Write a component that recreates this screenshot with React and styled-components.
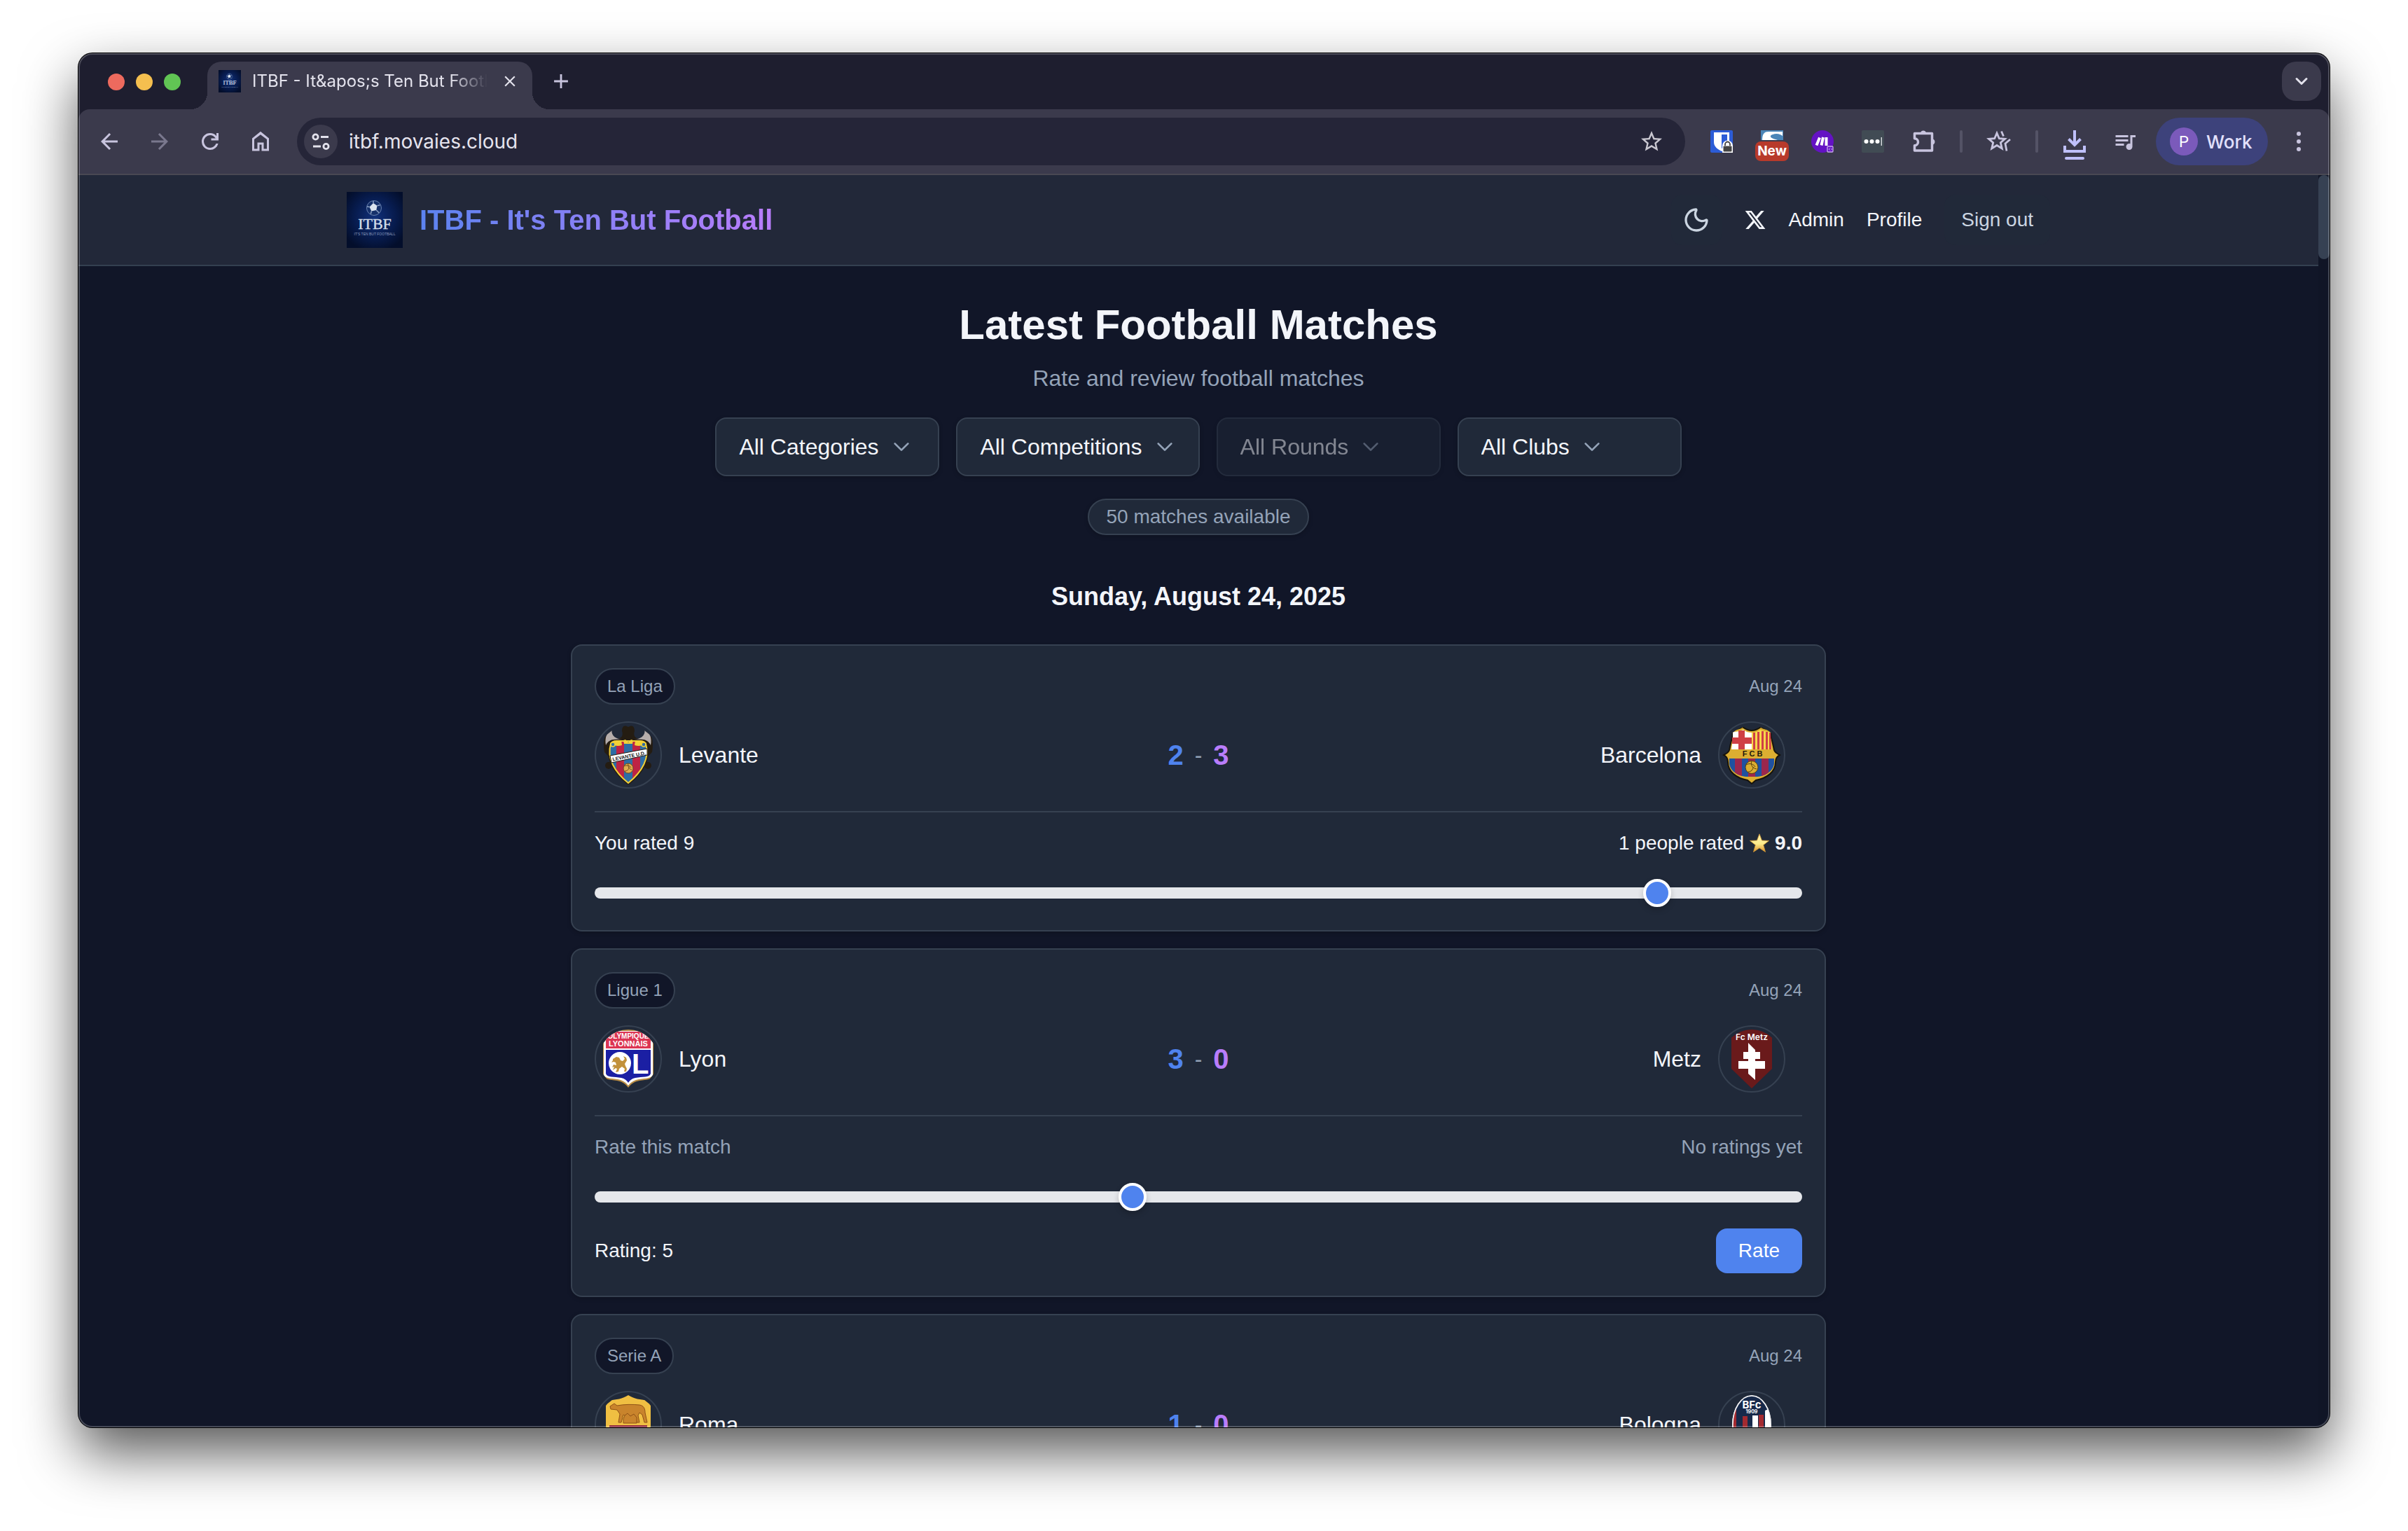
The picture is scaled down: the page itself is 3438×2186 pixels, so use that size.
import { useState } from "react";
import styled, { createGlobalStyle, css } from "styled-components";
import { Moon } from "lucide-react";
import { MdAdd, MdArrowBack, MdArrowForward, MdClose, MdQueueMusic, MdStarBorder } from "react-icons/md";

const GlobalStyle = createGlobalStyle`
    * {
        box-sizing: border-box;
    }
    body {
        margin: 0;
        background: #ffffff;
    }
    button, input, select {
        font: inherit;
        color: inherit;
        margin: 0;
    }
    button {
        border: none;
        background: none;
        padding: 0;
        cursor: pointer;
    }
    svg {
        display: block;
        flex-shrink: 0;
    }
`;

/* ---------- window ---------- */

const Desktop = styled.div`
    height: 100vh;
    padding: 76px 112px 148px;
    overflow: hidden;
`;

const Window = styled.div`
    position: relative;
    height: 100%;
    display: flex;
    flex-direction: column;
    overflow: hidden;
    border-radius: 20px;
    background: #1e1e2f;
    box-shadow: 0 0 0 1px #000000, 0 36px 80px rgba(0, 0, 0, 0.66);

    &::after {
        content: "";
        position: absolute;
        inset: 0;
        border: 2px solid rgba(255, 255, 255, 0.22);
        border-radius: 20px;
        pointer-events: none;
    }
`;

const TabStrip = styled.div`
    height: 80px;
    display: flex;
    align-items: flex-end;
    padding: 0 12px 0 42px;
    font-family: Inter, "Liberation Sans", sans-serif;
`;

const Lights = styled.div`
    display: flex;
    gap: 16px;
    align-self: center;
    margin-right: 14px;
    padding-top: 2px;
`;

const Light = styled.span`
    width: 24px;
    height: 24px;
    border-radius: 50%;
    background: ${(props) => props.$color};
`;

const Flare = styled.span`
    width: 24px;
    height: 24px;
    background: radial-gradient(circle at ${(props) => (props.$right ? "100%" : "0")} 0, transparent 24px, #3b3a4c 24px);
`;

const Tab = styled.div`
    width: 464px;
    height: 68px;
    display: flex;
    align-items: center;
    padding: 0 16px 12px;
    border-radius: 20px 20px 0 0;
    background: #3b3a4c;
    color: #e3e2ec;
`;

const TabTitle = styled.span`
    width: 336px;
    margin: 0 16px 0 16px;
    overflow: hidden;
    white-space: nowrap;
    font-size: 24px;
    line-height: 32px;
    mask-image: linear-gradient(90deg, #000 84%, transparent);
`;

const TabButton = styled.button`
    width: 32px;
    height: 32px;
    display: grid;
    place-items: center;
    color: ${(props) => props.$color || "#e3e2ec"};
`;

const NewTab = styled(TabButton)`
    height: 56px;
    margin-bottom: 12px;
`;

const TabSearch = styled(TabButton)`
    width: 56px;
    height: 56px;
    margin: 0 0 12px auto;
    border-radius: 20px;
    background: #3b3a4c;
`;

const Toolbar = styled.div`
    height: 94px;
    flex-shrink: 0;
    display: flex;
    align-items: center;
    padding: 0 8px;
    border-bottom: 2px solid #494853;
    border-radius: 16px 16px 0 0;
    background: #3b3a4c;
    color: #c8c4de;
    font-family: Inter, "Liberation Sans", sans-serif;
`;

const ToolButton = styled.button`
    width: 72px;
    height: 68px;
    display: grid;
    place-items: center;
    opacity: ${(props) => (props.disabled ? 0.45 : 1)};
`;

const Divider = styled.span`
    width: 4px;
    height: 32px;
    margin: 0 16px;
    border-radius: 2px;
    background: #545366;
`;

const AddressBar = styled.div`
    flex: 1;
    height: 68px;
    margin: 0 16px;
    padding: 0 30px 0 10px;
    display: flex;
    align-items: center;
    border-radius: 34px;
    background: #252538;
    color: #c9c7d0;
`;

const SiteInfo = styled.button`
    width: 48px;
    height: 48px;
    display: grid;
    place-items: center;
    border-radius: 50%;
    background: #3b3a4c;
`;

const Address = styled.input`
    flex: 1;
    min-width: 0;
    padding: 0 0 0 16px;
    border: none;
    outline: none;
    background: none;
    color: #e6e4ee;
    font-size: 28px;
    line-height: 40px;
`;

const ProfileChip = styled.button`
    width: 160px;
    height: 68px;
    margin: 0 8px;
    padding: 0 20px;
    display: flex;
    align-items: center;
    gap: 12px;
    border-radius: 34px;
    background: #3d427b;
    color: #e2e0fb;
    font-size: 26px;
    font-weight: 500;
`;

const ProfileInitial = styled.span`
    width: 40px;
    height: 40px;
    display: grid;
    place-items: center;
    border-radius: 50%;
    background: #7b5abb;
    color: #ffffff;
    font-family: Roboto, sans-serif;
    font-size: 22px;
    font-weight: 400;
`;

/* ---------- page ---------- */

const Viewport = styled.div`
    flex: 1;
    min-height: 0;
    display: flex;
    background: #111628;
    color: #f3f5fa;
    font-family: "Liberation Sans", Arial, sans-serif;
`;

const Page = styled.div`
    flex: 1;
    min-width: 0;
    overflow: hidden;
`;

const ScrollTrack = styled.div`
    width: 16px;
    background: #101526;
`;

const ScrollThumb = styled.div`
    height: 120px;
    border-radius: 8px;
    background: #364153;
`;

const Header = styled.header`
    border-bottom: 2px solid #344050;
    background: #222839;
`;

const HeaderInner = styled.div`
    max-width: 2560px;
    height: 128px;
    margin: 0 auto;
    padding: 0 64px;
    display: flex;
    align-items: center;
    justify-content: space-between;
`;

const Brand = styled.a`
    display: flex;
    align-items: center;
    gap: 24px;
    text-decoration: none;
`;

const BrandName = styled.span`
    font-size: 40px;
    font-weight: 700;
    line-height: 56px;
    background: linear-gradient(90deg, #5c83f0, #b97dfb);
    background-clip: text;
    color: transparent;
`;

const Nav = styled.nav`
    display: flex;
    align-items: center;
    gap: 32px;
    font-size: 28px;
    line-height: 40px;
`;

const NavLink = styled.a`
    color: #f3f5fa;
    text-decoration: none;
`;

const NavButton = styled.button`
    height: 72px;
    padding: 0 ${(props) => (props.$icon ? 16 : 24)}px;
    border-radius: 16px;
    background: #212939;
    color: #cbd5e1;
`;

const Main = styled.main`
    padding: 48px 32px;
    display: flex;
    flex-direction: column;
    align-items: center;
`;

const Title = styled.h1`
    margin: 0 0 16px;
    font-size: 60px;
    line-height: 72px;
`;

const Subtitle = styled.p`
    margin: 0 0 32px;
    color: #94a3b8;
    font-size: 32px;
    line-height: 48px;
`;

const Filters = styled.div`
    display: flex;
    gap: 24px;
    margin-bottom: 32px;
`;

const panel = css`
    border: 2px solid #364151;
    background: #202939;
    box-shadow: 0 2px 6px rgba(0, 0, 0, 0.2);
`;

const FilterBox = styled.label`
    ${panel}
    min-width: 320px;
    height: 84px;
    padding: 0 32px;
    display: flex;
    align-items: center;
    gap: 16px;
    border-radius: 16px;
    opacity: ${(props) => (props.$disabled ? 0.5 : 1)};
`;

const FilterSelect = styled.select`
    appearance: none;
    field-sizing: content;
    padding: 0;
    border: none;
    outline: none;
    background: none;
    color: #f3f5fa;
    font-size: 32px;
    line-height: 48px;
    opacity: 1;
`;

const Count = styled.span`
    ${panel}
    height: 52px;
    padding: 0 24px;
    display: flex;
    align-items: center;
    border-radius: 26px;
    color: #94a3b8;
    font-size: 28px;
`;

const DateHeading = styled.h2`
    margin: 60px 0 40px;
    font-size: 36px;
    line-height: 56px;
`;

const MatchList = styled.div`
    width: 100%;
    max-width: 1792px;
    display: flex;
    flex-direction: column;
    gap: 24px;
`;

const Card = styled.article`
    ${panel}
    padding: 32px;
    border-radius: 16px;
`;

const Row = styled.div`
    display: flex;
    align-items: center;
    justify-content: space-between;
    color: ${(props) => (props.$muted ? "#94a3b8" : "#f3f5fa")};
    font-size: 28px;
    line-height: 40px;
`;

const CardTop = styled(Row)`
    margin-bottom: 24px;
    color: #94a3b8;
    font-size: 24px;
`;

const League = styled.span`
    height: 52px;
    padding: 0 16px;
    display: flex;
    align-items: center;
    border: 2px solid #364151;
    border-radius: 26px;
    background: #111628;
`;

const Teams = styled.div`
    display: grid;
    grid-template-columns: 1fr auto 1fr;
    align-items: center;
    padding-bottom: 32px;
    margin-bottom: 24px;
    border-bottom: 2px solid #364151;
    font-size: 32px;
    line-height: 48px;
`;

const Team = styled.div`
    display: flex;
    align-items: center;
    gap: 24px;
    ${(props) => props.$away && "justify-content: flex-end; padding-right: 24px;"}
`;

const Badge = styled.span`
    width: 96px;
    height: 96px;
    padding: 4px;
    border: 2px solid #364151;
    border-radius: 50%;

    svg {
        border-radius: 50%;
    }
`;

const Score = styled.div`
    display: flex;
    align-items: center;
    gap: 16px;
    color: #94a3b8;
`;

const Goals = styled.strong`
    color: ${(props) => (props.$away ? "#b97dfb" : "#4f83ee")};
    font-size: 40px;
    line-height: 56px;
`;

const Average = styled.span`
    display: flex;
    align-items: center;
    gap: 8px;
`;

const SliderRow = styled.div`
    height: 48px;
    margin-top: 24px;
    padding-top: 7px;
`;

const Slider = styled.input`
    appearance: none;
    display: block;
    width: 100%;
    height: 40px;
    background: none;
    cursor: pointer;

    &::-webkit-slider-runnable-track {
        height: 16px;
        border-radius: 8px;
        background: #e5e7eb;
    }

    &::-webkit-slider-thumb {
        appearance: none;
        width: 40px;
        height: 40px;
        margin-top: -12px;
        border: 4px solid #ffffff;
        border-radius: 50%;
        background: #4f83ee;
        box-shadow: 0 4px 8px rgba(0, 0, 0, 0.2);
    }
`;

const RateRow = styled(Row)`
    margin-top: 24px;
`;

const RateButton = styled.button`
    height: 64px;
    padding: 0 32px;
    border-radius: 16px;
    background: #4f83ee;
    color: #ffffff;
`;

/* ---------- icons ---------- */

const Logo = ({ size, id }) => (
    <svg width={size} height={size} viewBox="0 0 80 80" role="img" aria-label="ITBF">
        <defs>
            <radialGradient id={id} cx="50%" cy="45%" r="62%">
                <stop offset="0" stopColor="#10307a" />
                <stop offset="0.6" stopColor="#071b4d" />
                <stop offset="1" stopColor="#030e2b" />
            </radialGradient>
        </defs>
        <rect width="80" height="80" fill={`url(#${id})`} />
        <circle cx="39" cy="23" r="10.5" fill="#15306a" stroke="#6780ae" strokeWidth="1" />
        <path d="M38 16l5.500 3.800-1.200 6.200-7 1.500-2.800-6z" fill="#dbe4ef" />
        <path d="M38 16v-3M43.500 19.800l4-1M42.300 26l4 4M35.300 27.500l-1 4M32.500 21.500l-3.500-.5" stroke="#8fa3c6" strokeWidth="1.500" />
        <text x="40" y="53" textAnchor="middle" fontFamily="Liberation Serif, serif" fontSize="22" stroke="#d4dde8" strokeWidth=".4" fill="#d4dde8">ITBF</text>
        <text x="40" y="62" textAnchor="middle" fontFamily="Liberation Sans, sans-serif" fontSize="5" fill="#8b9bbb">IT'S TEN BUT FOOTBALL</text>
    </svg>
);

const ReloadIcon = () => (
    <svg width="36" height="36" viewBox="0 0 24 24" fill="currentColor">
        <path d="M12 20q-3.350 0-5.675-2.325T4 12t2.325-5.675T12 4q1.725 0 3.300.713T18 6.750V4h2v7h-7V9h4.200q-.8-1.400-2.187-2.200T12 6Q9.500 6 7.750 7.750T6 12t1.750 4.250T12 18q1.925 0 3.475-1.100T17.650 14h2.100q-.7 2.650-2.850 4.325T12 20" />
    </svg>
);

const HomeIcon = () => (
    <svg width="36" height="36" viewBox="0 0 24 24" fill="currentColor">
        <path d="M6 19h3v-6h6v6h3v-9l-6-4.500L6 10v9zm-2 2V9l8-6.500L20 9v12h-7v-6h-2v6H4z" />
    </svg>
);

const TuneIcon = () => (
    <svg width="28" height="28" viewBox="0 0 28 28" fill="none" stroke="#e3e2ec" strokeWidth="2.800">
        <circle cx="6.500" cy="7.500" r="3.600" />
        <path d="M14 7.500h11M3 21h11" />
        <circle cx="21.500" cy="21" r="3.600" />
    </svg>
);

const VaultIcon = () => (
    <svg width="32" height="32" viewBox="0 0 32 32">
        <rect width="32" height="32" rx="2" fill="#2c5cd6" />
        <path d="M5 3h22v14c0 6-5 10-11 13C10 27 5 23 5 17z" fill="#fff" />
        <path d="M16 6h8v11c0 4-4 6-8 9z" fill="#2c5cd6" />
        <path d="M17 32V22a7.500 7.500 0 0 1 15 0v10z" fill="#fff" />
        <rect x="18.500" y="22.500" width="12" height="8" rx="1" fill="#444" />
        <path d="M21 22v-2a3.500 3.500 0 0 1 7 0v2" fill="none" stroke="#444" strokeWidth="1.800" />
    </svg>
);

const NewBadgeIcon = () => (
    <svg width="48" height="56" viewBox="0 -12 48 56">
        <rect x="8" width="32" height="14" fill="#4b86b8" />
        <path d="M10 14c0-9 3-12 9-12h20v6c-6-5-15-3-17 0-1 3 4 4 10 6z" fill="#fff" />
        <path d="M22 8c3-3 11-3 17 3v3c-4-3-10-3-14-4z" fill="#4b86b8" />
        <rect y="16" width="48" height="28" rx="8" fill="#b83a2b" />
        <text x="24" y="36" textAnchor="middle" fontFamily="Inter, sans-serif" fontSize="19" fontWeight="700" fill="#fff">New</text>
    </svg>
);

const MakeIcon = () => (
    <svg width="32" height="32" viewBox="0 0 32 32">
        <circle cx="16" cy="16" r="16" fill="#6412c4" />
        <path d="M7.500 21.500l4.500-11M14.500 21.500l2.500-11.500M21.500 10v12" stroke="#fff" strokeWidth="4" fill="none" />
        <rect x="23" y="23" width="8" height="8" rx="1" fill="#6412c4" stroke="#c9a9f0" strokeWidth="1.300" />
        <path d="M26.500 25.500l-1.500 1.500 1.500 1.500M28 25.500l1.500 1.500-1.500 1.500" stroke="#c9a9f0" fill="none" />
    </svg>
);

const DotsIcon = () => (
    <svg width="32" height="32" viewBox="0 0 32 32">
        <rect width="32" height="32" rx="2" fill="#414b54" />
        <circle cx="6.500" cy="16" r="3" fill="#fff" />
        <circle cx="14.500" cy="16" r="3" fill="#fff" />
        <circle cx="22.500" cy="16" r="3" fill="#fff" />
        <path d="M28.300 10v12" stroke="#dcdfe2" strokeWidth="1.400" />
    </svg>
);

const PuzzleIcon = () => (
    <svg width="36" height="36" viewBox="0 0 36 36" fill="none" stroke="currentColor" strokeWidth="3.500" strokeLinejoin="round">
        <path d="M5.500 6.500h25v24.500h-25v-7.200a5 5 0 0 0 0-10z" />
        <path d="M14 5.500a4.200 4.200 0 0 1 8 0zM31.500 14.500a4.200 4.200 0 0 1 0 8z" fill="currentColor" stroke="none" />
    </svg>
);

const StarsIcon = () => (
    <svg width="36" height="36" viewBox="0 0 36 36" fill="none" stroke="currentColor" strokeWidth="2.800">
        <path d="M15 6l3.300 7.700 8.200.6-6.200 5.400 2 8.300L15 23.500 7.700 28l2-8.300-6.200-5.400 8.200-.6z" />
        <path d="M21.500 3.500l3 7M34 15l-7 6 2 10.500" />
    </svg>
);

const DownloadIcon = () => (
    <svg width="36" height="56" viewBox="0 -4 36 56" fill="none" stroke="#bfc0fb" strokeWidth="4">
        <path d="M18 8v20M9.500 20.500L18 29l8.500-8.500M4 30v8h28v-8" />
        <path d="M6 48h24" strokeLinecap="round" />
    </svg>
);

const KebabIcon = () => (
    <svg width="8" height="30" viewBox="0 0 8 30" fill="currentColor">
        <circle cx="4" cy="4" r="3" />
        <circle cx="4" cy="15" r="3" />
        <circle cx="4" cy="26" r="3" />
    </svg>
);

const Chevron = ({ size = 32, width = 2, color = "#94a3b8" }) => (
    <svg width={size} height={size} viewBox="0 0 24 24" fill="none" stroke={color} strokeWidth={width}>
        <path d="M19 8.500l-7 7-7-7" strokeLinecap="round" strokeLinejoin="round" />
    </svg>
);

const XIcon = () => (
    <svg width="32" height="32" viewBox="0 0 24 24" fill="currentColor">
        <path d="M18.244 2.250h3.308l-7.227 8.260 8.502 11.240H16.170l-5.214-6.817L4.990 21.750H1.680l7.730-8.835L1.254 2.250H8.080l4.713 6.231zm-1.161 17.520h1.833L7.084 4.126H5.117z" />
    </svg>
);

const GoldStar = () => (
    <svg width="28" height="28" viewBox="0 0 28 28">
        <defs>
            <linearGradient id="gold" x1="0" y1="0" x2="0" y2="1">
                <stop offset="0" stopColor="#fdf3b0" />
                <stop offset="0.55" stopColor="#fdeb8a" />
                <stop offset="1" stopColor="#d9902c" />
            </linearGradient>
        </defs>
        <path d="M14 .8l3.500 9.200 10 .4-7.800 6.200 2.800 9.800-8.500-5.600-8.500 5.600 2.800-9.800L.5 10.400l10-.4z" fill="url(#gold)" stroke="#d69a35" strokeWidth=".8" strokeLinejoin="round" />
    </svg>
);

/* ---------- crests ---------- */

const Crest = ({ children, label }) => (
    <svg width="84" height="84" viewBox="0 0 84 84" role="img" aria-label={label}>{children}</svg>
);

const levanteShield = "M17 26c3-3 8-4 13-4h24c5 0 10 1 13 4 6 20-5 40-25 56C22 66 11 46 17 26z";

const Levante = () => (
    <Crest label="Levante">
        <path d="M18 2C9 8 5 22 8 38l6 6 28-12 28 12 6-6c3-16-1-30-10-36 3 9-1 17-9 17-6-1-8-6-6-11 0-5-2-8-5-8l-4 2-4-2c-3 0-5 3-5 8 2 5 0 10-6 11-8 0-12-8-9-17z" fill="#241c12" />
        <circle cx="14" cy="57" r="5" fill="#241c12" />
        <circle cx="70" cy="57" r="5" fill="#241c12" />
        <path d="M19 4C11 9 8 18 10 28c3-6 8-9 16-8h9c-9 0-19-5-16-16zM65 4c8 5 11 14 9 24-3-6-8-9-16-8h-9c9 0 19-5 16-16z" fill="#b5adab" />
        <clipPath id="lev"><path d={levanteShield} /></clipPath>
        <path d={levanteShield} fill="#241c12" stroke="#241c12" strokeWidth="5" />
        <g clipPath="url(#lev)">
            <rect width="84" height="84" fill="#2d6da5" />
            <path d="M25 20h11v64H25zM48 20h11v64H48z" fill="#bd2344" />
        </g>
        <path d={levanteShield} fill="none" stroke="#f2d036" strokeWidth="2" />
        <path d="M16 25c4-5 9-4 16-4l1 7c-6 2-11 1-17-3zM68 25c-4-5-9-4-16-4l-1 7c6 2 11 1 17-3zM35 21l3-1 4 4 4-4 3 1-1 5H36z" fill="#f2d036" />
        <circle cx="20" cy="27" r="3" fill="#2d6da5" stroke="#f2d036" strokeWidth="1.500" />
        <circle cx="64" cy="27" r="3" fill="#2d6da5" stroke="#f2d036" strokeWidth="1.500" />
        <path d="M16 43l53-10v9L18 53z" fill="#fff" stroke="#241c12" strokeWidth="1" />
        <text x="43" y="46" textAnchor="middle" transform="rotate(-11 43 43)" fontFamily="Liberation Sans Narrow, Liberation Sans, sans-serif" fontSize="7" fontWeight="700" fill="#111">LEVANTE U.D.</text>
        <circle cx="42" cy="61" r="7" fill="#e0ac4e" stroke="#6e4b1c" strokeWidth="1" />
        <path d="M36 58c4-2 8-1 10 2M42 54c-1 4 1 8 5 9M37 65c3 0 6-2 6-6" fill="none" stroke="#6e4b1c" strokeWidth="1" />
    </Crest>
);

const barcaShape = "M29 2c4 3 9 5 13 5s9-2 13-5c5 3 10 4 16 4-2 4-2 8-1 12 2 6 3 13 4 17 1 3 4 5 8 7-4 2-6 5-6 10 0 14-12 23-28 26l-6 5-6-5C20 75 8 66 8 52c0-5-2-8-6-10 4-2 7-4 8-7 1-4 2-11 4-17 1-4 1-8-1-12 6 0 11-1 16-4z";

const Barcelona = () => (
    <Crest label="Barcelona">
        <path d={barcaShape} fill="#dcae31" stroke="#17140c" strokeWidth="2" />
        <path d="M15 9c5 0 10-1 15-3 4 3 8 4 12 4v24H13l2-16z" fill="#fff" />
        <path d="M23 7h9v27h-9zM14 17h28v9H14z" fill="#cf3f45" />
        <path d="M42 10c4 0 8-1 12-4 5 2 10 3 15 3v9l2 16H42z" fill="#f7d84b" />
        <path d="M44 10h3v24h-3zM50 9h3v25h-3zM56 8h3v26h-3zM62 9h3v25h-3zM67 10h2l1 24h-3z" fill="#cf3f45" />
        <text x="43" y="44" textAnchor="middle" fontFamily="Liberation Sans, sans-serif" fontSize="11" fontWeight="700" fill="#1f1a0c">F C B</text>
        <clipPath id="bar"><path d="M10 47h64v6c0 11-12 19-24 20H34C22 72 10 64 10 53z" /></clipPath>
        <g clipPath="url(#bar)">
            <rect y="40" width="84" height="40" fill="#1f51a0" />
            <path d="M18 46h10v30H18zM37 46h10v30H37zM56 46h10v30H56z" fill="#9b274d" />
        </g>
        <circle cx="42" cy="59.500" r="9" fill="#dcae31" stroke="#54410f" strokeWidth="1" />
        <path d="M34 56c5-3 11-1 13 3M42 51c-2 5 1 10 7 11M37 66c4 0 7-3 7-7" fill="none" stroke="#54410f" strokeWidth="1" />
    </Crest>
);

const Lyon = () => (
    <Crest label="Lyon">
        <path d="M6 0h72v66c-3 7-13 5-24 8-6 2-9 5-12 9-3-4-6-7-12-9C19 71 9 73 6 66z" fill="#b98d45" />
        <path d="M7 2h70v63c-3 6-13 4-24 7-5 2-8 4-11 8-3-4-6-6-11-8C20 69 10 71 7 65z" fill="#fff" />
        <path d="M10 3h64v24H10z" fill="#dc3553" />
        <path d="M10 29h64v34c-2 6-12 4-22 6-5 1-8 4-10 7-2-3-5-6-10-7-10-2-20 0-22-6z" fill="#1b1fa3" />
        <text x="42" y="13" textAnchor="middle" fontFamily="Liberation Sans, sans-serif" fontSize="10" fontWeight="700" fill="#fff">OLYMPIQUE</text>
        <text x="42" y="24" textAnchor="middle" fontFamily="Liberation Sans, sans-serif" fontSize="11" fontWeight="700" fill="#fff">LYONNAIS</text>
        <circle cx="30" cy="48" r="16" fill="#fff" />
        <path d="M20 42l5-3 4 1 2 4 3 1 3-3-2-4 4 2 1 4-3 5 1 3 2 4-1 4h-3l1-4-4-3-4 3-1 4-4 1 2-5-2-1-4 3 2-5-3 1 2-4 4 1-1-4-3-1-3 1 2-3z" fill="#c2913b" />
        <text x="47" y="63" fontFamily="Liberation Sans, sans-serif" fontSize="40" fontWeight="700" fill="#fff">L</text>
    </Crest>
);

const Metz = () => (
    <Crest label="Metz">
        <path d="M13 11C22 1 32 0 42 0s20 1 29 11v45L42 84 13 56z" fill="#6a1a1b" />
        <text x="42" y="15" textAnchor="middle" fontFamily="Inter, sans-serif" fontSize="12" fontWeight="600" fill="#fff">Fc Metz</text>
        <path d="M37 19l10 10v3h7v10h-7v3h14v11H47v16L37 63v-7H23V45h14v-3h-7V32h7z" fill="#fff" />
    </Crest>
);

const Roma = () => (
    <Crest label="Roma">
        <path d="M42 0c8 5 18 7 26 7l6 7v28c0 20-16 34-32 42C26 76 10 62 10 42V14l6-7c8 0 18-2 26-7z" fill="#f0bf42" />
        <path d="M15 43h54c0 17-13 29-27 37C28 72 15 60 15 43z" fill="#8e2038" />
        <path d="M16 16l6-4 4 3c10-2 22-2 32-1 6 1 8 5 8 11l3 14h-4l-3-11-4-3-2 4 2 10h-4l-2-9c-6 2-12 1-17-2l-3 11h-4l2-12-4-6-9-1z" fill="#c9842c" stroke="#8f5217" strokeWidth="1" />
        <path d="M37 29l4-3 4 4 5-3 4 5v8H35v-6z" fill="#c9842c" stroke="#8f5217" strokeWidth="1" />
    </Crest>
);

const Bologna = () => (
    <Crest label="Bologna">
        <clipPath id="bol"><ellipse cx="42" cy="42" rx="27" ry="41" /></clipPath>
        <ellipse cx="42" cy="42" rx="28" ry="42" fill="#f1f1f3" />
        <g clipPath="url(#bol)">
            <rect width="84" height="84" fill="#17294a" />
            <path d="M14 24l6-5v65h-6zM29 30h7v54h-7zM52 28h7v56h-7z" fill="#a32a30" />
            <path d="M43 29h8v55h-8zM61 22l10-4v66H61z" fill="#fff" />
        </g>
        <ellipse cx="42" cy="42" rx="27" ry="41" fill="none" stroke="#f1f1f3" strokeWidth="1.500" />
        <text x="42" y="19" textAnchor="middle" fontFamily="Inter, sans-serif" fontSize="15" fontWeight="700" fill="#fff">BFc</text>
        <text x="42" y="26" textAnchor="middle" fontFamily="Inter, sans-serif" fontSize="7" fontWeight="700" fill="#fff">1909</text>
    </Crest>
);

/* ---------- data ---------- */

const filters = [
    { id: "category", text: "All Categories" },
    { id: "competition", text: "All Competitions" },
    { id: "round", text: "All Rounds", disabled: true },
    { id: "club", text: "All Clubs" },
];

const matches = [
    { league: "La Liga", home: "Levante", away: "Barcelona", homeCrest: Levante, awayCrest: Barcelona, score: [2, 3], rated: 9, average: "9.0", people: 1 },
    { league: "Ligue 1", home: "Lyon", away: "Metz", homeCrest: Lyon, awayCrest: Metz, score: [3, 0] },
    { league: "Serie A", home: "Roma", away: "Bologna", homeCrest: Roma, awayCrest: Bologna, score: [1, 0] },
];

const Match = ({ match }) => {
    const [rating, setRating] = useState(match.rated || 5);
    const HomeCrest = match.homeCrest;
    const AwayCrest = match.awayCrest;

    return (
        <Card>
            <CardTop>
                <League>{match.league}</League>
                <span>Aug 24</span>
            </CardTop>
            <Teams>
                <Team>
                    <Badge><HomeCrest /></Badge>
                    <span>{match.home}</span>
                </Team>
                <Score>
                    <Goals>{match.score[0]}</Goals>
                    <span>-</span>
                    <Goals $away>{match.score[1]}</Goals>
                </Score>
                <Team $away>
                    <span>{match.away}</span>
                    <Badge><AwayCrest /></Badge>
                </Team>
            </Teams>
            {match.rated ? (
                <Row>
                    <span>You rated {match.rated}</span>
                    <Average>
                        {match.people} people rated <GoldStar /> <strong>{match.average}</strong>
                    </Average>
                </Row>
            ) : (
                <Row $muted>
                    <span>Rate this match</span>
                    <span>No ratings yet</span>
                </Row>
            )}
            <SliderRow>
                <Slider
                    type="range"
                    min="1"
                    max="10"
                    value={rating}
                    aria-label={`Rating for ${match.home} - ${match.away}`}
                    onChange={(e) => setRating(Number(e.target.value))}
                />
            </SliderRow>
            {!match.rated && (
                <RateRow>
                    <span>Rating: {rating}</span>
                    <RateButton>Rate</RateButton>
                </RateRow>
            )}
        </Card>
    );
};

const Browser = ({ children }) => {
    return (
        <Window>
            <TabStrip>
                <Lights>
                    <Light $color="#ed6a5e" />
                    <Light $color="#f5bf4f" />
                    <Light $color="#61c554" />
                </Lights>
                <Flare />
                <Tab>
                    <Logo size={32} id="favicon" />
                    <TabTitle>ITBF - It&amp;apos;s Ten But Football</TabTitle>
                    <TabButton aria-label="Close tab"><MdClose size={26} /></TabButton>
                </Tab>
                <Flare $right />
                <NewTab aria-label="New tab" $color="#c8c4de"><MdAdd size={34} /></NewTab>
                <TabSearch aria-label="Search tabs"><Chevron size={24} width={3} color="#e3e2ec" /></TabSearch>
            </TabStrip>
            <Toolbar>
                <ToolButton aria-label="Back"><MdArrowBack size={36} /></ToolButton>
                <ToolButton aria-label="Forward" disabled><MdArrowForward size={36} /></ToolButton>
                <ToolButton aria-label="Reload"><ReloadIcon /></ToolButton>
                <ToolButton aria-label="Home"><HomeIcon /></ToolButton>
                <AddressBar>
                    <SiteInfo aria-label="Site information"><TuneIcon /></SiteInfo>
                    <Address aria-label="Address" defaultValue="itbf.movaies.cloud" />
                    <MdStarBorder size={36} />
                </AddressBar>
                <ToolButton aria-label="Password vault"><VaultIcon /></ToolButton>
                <ToolButton aria-label="Session extension"><NewBadgeIcon /></ToolButton>
                <ToolButton aria-label="Make"><MakeIcon /></ToolButton>
                <ToolButton aria-label="Text extension"><DotsIcon /></ToolButton>
                <ToolButton aria-label="Extensions"><PuzzleIcon /></ToolButton>
                <Divider />
                <ToolButton aria-label="Bookmarks"><StarsIcon /></ToolButton>
                <Divider />
                <ToolButton aria-label="Downloads"><DownloadIcon /></ToolButton>
                <ToolButton aria-label="Media"><MdQueueMusic size={36} /></ToolButton>
                <ProfileChip>
                    <ProfileInitial>P</ProfileInitial>
                    Work
                </ProfileChip>
                <ToolButton aria-label="Menu"><KebabIcon /></ToolButton>
            </Toolbar>
            {children}
        </Window>
    );
};

const App = () => {
    return (
        <Desktop>
            <GlobalStyle />
            <Browser>
                <Viewport>
                    <Page>
                        <Header>
                            <HeaderInner>
                                <Brand href="#">
                                    <Logo size={80} id="brand" />
                                    <BrandName>ITBF - It's Ten But Football</BrandName>
                                </Brand>
                                <Nav>
                                    <NavButton $icon aria-label="Toggle theme"><Moon size={40} /></NavButton>
                                    <NavLink href="#" aria-label="X"><XIcon /></NavLink>
                                    <NavLink href="#">Admin</NavLink>
                                    <NavLink href="#">Profile</NavLink>
                                    <NavButton>Sign out</NavButton>
                                </Nav>
                            </HeaderInner>
                        </Header>
                        <Main>
                            <Title>Latest Football Matches</Title>
                            <Subtitle>Rate and review football matches</Subtitle>
                            <Filters>
                                {filters.map((filter) => (
                                    <FilterBox key={filter.id} $disabled={filter.disabled}>
                                        <FilterSelect aria-label={filter.text} disabled={filter.disabled}>
                                            <option>{filter.text}</option>
                                        </FilterSelect>
                                        <Chevron />
                                    </FilterBox>
                                ))}
                            </Filters>
                            <Count>50 matches available</Count>
                            <DateHeading>Sunday, August 24, 2025</DateHeading>
                            <MatchList>
                                {matches.map((match) => (
                                    <Match key={match.home} match={match} />
                                ))}
                            </MatchList>
                        </Main>
                    </Page>
                    <ScrollTrack>
                        <ScrollThumb />
                    </ScrollTrack>
                </Viewport>
            </Browser>
        </Desktop>
    );
};

export default App;
